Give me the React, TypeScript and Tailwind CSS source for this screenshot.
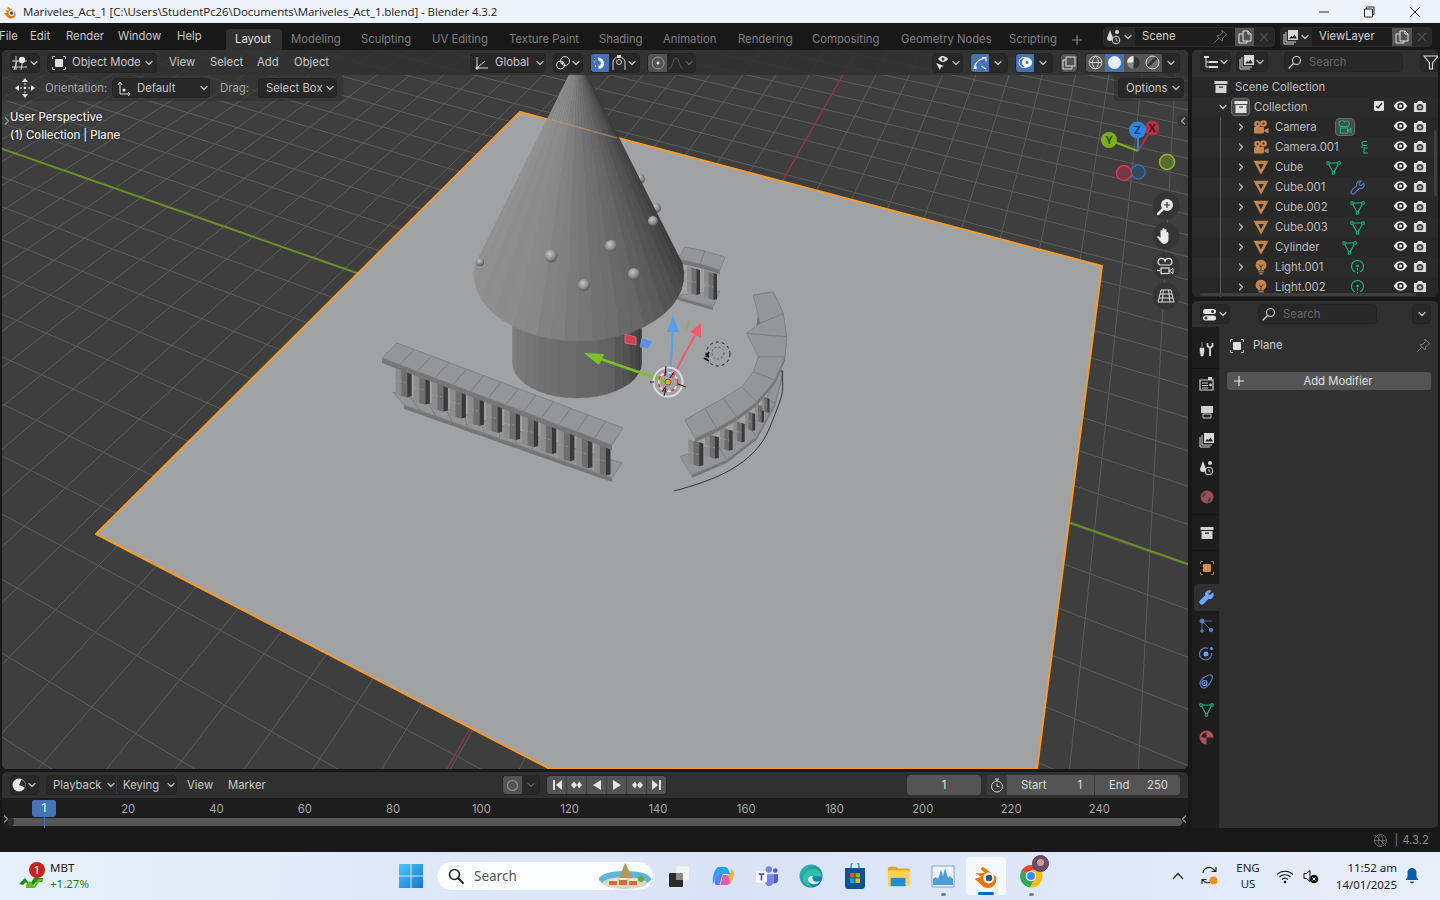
import React from "react";

type P = { children?: React.ReactNode; className?: string };
type Pt = [number, number];

/* ---------- small blender icons ---------- */
const Chev = ({ dir = "down", color = "#c4c4c4", size = 10 }: { dir?: string; color?: string; size?: number }) => (
  <svg width={size} height={size} viewBox="0 0 10 10" className="shrink-0">
    <path
      d={dir === "down" ? "M2 3.500 5 6.500 8 3.500" : dir === "right" ? "M3.500 2 6.500 5 3.500 8" : "M6.500 2 3.500 5 6.500 8"}
      fill="none"
      stroke={color}
      strokeWidth="1.200"
      strokeLinecap="round"
      strokeLinejoin="round"
    />
  </svg>
);

const ObjSquare = ({ fill = "#e0e0e0", line = "#bdbdbd" }: { fill?: string; line?: string }) => (
  <svg width="16" height="16" viewBox="0 0 16 16" className="shrink-0">
    <rect x="4" y="4" width="8" height="8" rx="1" fill={fill} />
    <path d="M1.500 4V1.500H4M12 1.500h2.500V4M14.500 12v2.500H12M4 14.500H1.500V12" fill="none" stroke={line} strokeWidth="1" />
  </svg>
);

const View3D = () => (
  <svg width="17" height="16" viewBox="0 0 17 16" className="shrink-0">
    <path d="M1 6h15M1 12h15M5 1v14M12 3 10 15M3 15l3-9" stroke="#cfcfcf" strokeWidth="1" fill="none" />
    <circle cx="11" cy="5" r="3.200" fill="#e4e4e4" />
  </svg>
);

const Eye = () => (
  <svg width="15" height="12" viewBox="0 0 15 12" className="shrink-0">
    <path d="M.8 6C3 2.500 5 1.300 7.500 1.300S12 2.500 14.200 6C12 9.500 10 10.700 7.500 10.700S3 9.500.8 6Z" fill="#ececec" />
    <circle cx="7.500" cy="6" r="3.200" fill="#2a2a2a" />
    <circle cx="7.500" cy="6" r="1.500" fill="#ececec" />
  </svg>
);

const CamRestrict = () => (
  <svg width="14" height="13" viewBox="0 0 14 13" className="shrink-0">
    <path d="M1 3h3l1-2h4l1 2h3v9H1Z" fill="#dedede" />
    <circle cx="7" cy="7.300" r="3.300" fill="#3a3a3a" />
    <circle cx="7" cy="7.300" r="1.600" fill="#bcbcbc" />
  </svg>
);

const MeshObj = () => (
  <svg width="16" height="15" viewBox="0 0 16 15" className="shrink-0">
    <path fillRule="evenodd" d="M.5 .8h15L8 14.800ZM5.200 4 8 9.500 10.800 4Z" fill="#c4864c" />
  </svg>
);

const CamObj = () => (
  <svg width="16" height="15" viewBox="0 0 16 15" className="shrink-0">
    <circle cx="4.500" cy="4" r="3.300" fill="#c4864c" />
    <circle cx="10.500" cy="3.500" r="3.300" fill="#c4864c" />
    <rect x="1" y="7" width="10" height="6.500" rx="1" fill="#c4864c" />
    <path d="M11.500 10 15.500 8v5.500l-4-2Z" fill="#c4864c" />
    <circle cx="4.500" cy="4" r="1" fill="#2a2a2a" />
    <circle cx="10.500" cy="3.500" r="1" fill="#2a2a2a" />
  </svg>
);

const LightObj = () => (
  <svg width="14" height="16" viewBox="0 0 14 16" className="shrink-0">
    <path d="M7 .8a5.300 5.300 0 0 1 3 9.700v1H4v-1A5.300 5.300 0 0 1 7 .8Z" fill="#c4864c" />
    <path d="M5 5.500 7 8l2-2.500M7 8v3" stroke="#2a2a2a" strokeWidth=".9" fill="none" />
    <path d="M4.500 12.800h5M5.500 14.800h3" stroke="#c4864c" strokeWidth="1.200" />
  </svg>
);

const GreenTri = ({ color = "#12b886" }: { color?: string }) => (
  <svg width="15" height="15" viewBox="0 0 15 15" className="shrink-0">
    <path d="M2 3h11L7.500 13Z" fill="none" stroke={color} strokeWidth="1.100" />
    <path d="M.8 1.800h2.400v2.400H.8ZM11.800 1.800h2.400v2.400h-2.400ZM6.300 11.800h2.400v2.400H6.300Z" fill="#282828" stroke={color} strokeWidth="1" />
  </svg>
);

const BlueWrench = ({ size = 15, fill = "none", color = "#5680c2" }: { size?: number; fill?: string; color?: string }) => (
  <svg width={size} height={size} viewBox="0 0 15 15" className="shrink-0">
    <path
      d="M13.800 3.200 11.200 5.600 9.400 5 8.900 3.400 11.500 1c-2-.6-3.900.2-4.600 2-.3.900-.2 1.700 0 2.400L1.500 10.600c-.8.800-.8 2 0 2.800s2 .8 2.800 0l5.300-5.200c.8.300 1.700.3 2.500 0 1.700-.7 2.400-2.800 1.700-5Z"
      fill={fill}
      stroke={color}
      strokeWidth="1.100"
      strokeLinejoin="round"
    />
  </svg>
);

const GreenBulb = () => (
  <svg width="15" height="16" viewBox="0 0 15 16" className="shrink-0">
    <path d="M5 12.800A6 6 0 1 1 10 12.800" fill="none" stroke="#12b886" strokeWidth="1.100" />
    <circle cx="7.500" cy="7" r="1.300" fill="#12b886" />
    <path d="M7.500 9v2.500M7.500 13v1.800" stroke="#12b886" strokeWidth="1.100" />
  </svg>
);

const GreenCam = ({ small }: { small?: boolean }) =>
  small ? (
    <svg width="10" height="15" viewBox="0 0 10 15" className="shrink-0">
      <path d="M7 1.500H4a2 2 0 0 0 0 4h3M8 8H4v5h4M2 8V6" fill="none" stroke="#12b886" strokeWidth="1.100" />
    </svg>
  ) : (
    <svg width="16" height="16" viewBox="0 0 16 16" className="shrink-0">
      <path d="M4.500 7.500a3 3 0 1 1 3-4.500 2.800 2.800 0 1 1 3 4.500Z" fill="none" stroke="#12b886" strokeWidth="1.100" />
      <rect x="3.500" y="9" width="7" height="5" fill="none" stroke="#12b886" strokeWidth="1.100" />
      <path d="M10.500 11.500 14 9.500v4Z" fill="none" stroke="#12b886" strokeWidth="1.100" />
    </svg>
  );

const BoxIcon = ({ color = "#d2d2d2" }: { color?: string }) => (
  <svg width="14" height="14" viewBox="0 0 14 14" className="shrink-0">
    <path fillRule="evenodd" d="M.5 1h13v3H.5ZM1.500 5h11v8h-11ZM5 6.500v1.300h4V6.500Z" fill={color} />
  </svg>
);

const SearchGlass = () => (
  <svg width="14" height="14" viewBox="0 0 14 14" className="shrink-0">
    <circle cx="8.500" cy="5.500" r="4" fill="none" stroke="#cfcfcf" strokeWidth="1.100" />
    <path d="M5.500 8.500 1 13" stroke="#cfcfcf" strokeWidth="1.200" strokeLinecap="round" />
  </svg>
);

const Pin = ({ color = "#9a9a9a" }: { color?: string }) => (
  <svg width="15" height="15" viewBox="0 0 15 15" className="shrink-0">
    <path d="M9 1.200 13.800 6l-1.600.5-2.700 2.700-.3 2.800-2-2-1.300-1.300-2-2 2.800-.4 2.700-2.700ZM5.800 9.200 1.200 13.800" fill="none" stroke={color} strokeWidth="1" strokeLinejoin="round" />
  </svg>
);

const CopyDoc = () => (
  <svg width="14" height="14" viewBox="0 0 14 14" className="shrink-0">
    <path d="M5 1h5l3 3v7H5ZM10 1v3h3M5 4H1v9h8v-2" fill="none" stroke="#e2e2e2" strokeWidth="1" />
  </svg>
);

const SmallX = () => (
  <svg width="12" height="12" viewBox="0 0 12 12" className="shrink-0">
    <path d="M2 2l8 8M10 2l-8 8" stroke="#4e4e4e" strokeWidth="1.200" />
  </svg>
);

const SceneIco = () => (
  <svg width="16" height="16" viewBox="0 0 16 16" className="shrink-0">
    <path d="M4 1 7 9a3 3 0 0 1-6 0Z" fill="#d8d8d8" />
    <circle cx="11" cy="3" r="2" fill="#d8d8d8" />
    <circle cx="10" cy="11" r="3.800" fill="none" stroke="#d8d8d8" strokeWidth="1" />
    <path d="M10 9v2l1.500 1" stroke="#d8d8d8" fill="none" />
  </svg>
);

const LayerIco = () => (
  <svg width="16" height="16" viewBox="0 0 16 16" className="shrink-0">
    <path d="M1 5v10h10M3 3v10h10" fill="none" stroke="#d8d8d8" strokeWidth="1" />
    <path fillRule="evenodd" d="M5 1h10v10H5ZM6 9.500h8l-2.500-4-2 2.500-1.200-1Z" fill="#d8d8d8" />
  </svg>
);

/* ---------- ui pieces ---------- */
const Btn = ({ children, className = "" }: P) => (
  <div className={`flex h-[20px] shrink-0 items-center rounded-[4px] border border-[#242424] bg-[#282828] text-[#c6c6c6] ${className}`}>{children}</div>
);

const Seg = ({ children, className = "" }: P) => <div className={`flex h-full items-center justify-center ${className}`}>{children}</div>;

const menuItems = [
  ["File", "w-[31px] -ml-[1px]"],
  ["Edit", "w-[36px]"],
  ["Render", "w-[52px]"],
  ["Window", "w-[59px]"],
  ["Help", "w-[49px]"],
];
const tabs = [
  ["Layout", "w-[56px]"],
  ["Modeling", "w-[70px]"],
  ["Sculpting", "w-[71px]"],
  ["UV Editing", "w-[77px]"],
  ["Texture Paint", "w-[90px]"],
  ["Shading", "w-[64px]"],
  ["Animation", "w-[75px]"],
  ["Rendering", "w-[74px]"],
  ["Compositing", "w-[89px]"],
  ["Geometry Nodes", "w-[108px]"],
  ["Scripting", "w-[68px]"],
];

const TopBar = () => (
  <div className="flex h-[27px] shrink-0 items-center bg-[#181818]">
    {menuItems.map(([t, w]) => (
      <span key={t} className={`${w} shrink-0 text-[#c8c8c8]`}>
        {t}
      </span>
    ))}
    <div className="mt-[6px] flex h-[21px] shrink-0 self-start">
      {tabs.map(([t, w], i) => (
        <div key={t} className={`flex shrink-0 items-center rounded-t-[4px] pl-[9px] ${w} ${i === 0 ? "bg-[#303030] text-[#e2e2e2]" : "text-[#808080]"}`}>
          {t}
        </div>
      ))}
      <div className="flex w-[35px] shrink-0 items-center pl-[3px] text-[#808080]">
        <svg width="12" height="12" viewBox="0 0 12 12">
          <path d="M6 1v10M1 6h10" stroke="#8a8a8a" strokeWidth="1.100" />
        </svg>
      </div>
    </div>
    <div className="flex h-[20px] w-[172px] shrink-0 items-stretch overflow-hidden rounded-[4px] border border-[#2c2c2c] bg-[#282828]">
      <Seg className="w-[31px] gap-[1px]">
        <SceneIco />
        <Chev />
      </Seg>
      <div className="flex w-[100px] items-center justify-between bg-[#1d1d1d] px-[7px] text-[#d4d4d4]">
        Scene
        <Pin color="#6f6f6f" />
      </div>
      <Seg className="w-[19px] bg-[#545454]">
        <CopyDoc />
      </Seg>
      <Seg className="w-[20px]">
        <SmallX />
      </Seg>
    </div>
    <div className="ml-[5px] flex h-[20px] w-[152px] shrink-0 items-stretch overflow-hidden rounded-[4px] border border-[#2c2c2c] bg-[#282828]">
      <Seg className="w-[31px] gap-[1px]">
        <LayerIco />
        <Chev />
      </Seg>
      <div className="flex w-[80px] items-center bg-[#1d1d1d] px-[7px] text-[#d4d4d4]">ViewLayer</div>
      <Seg className="w-[20px] bg-[#545454]">
        <CopyDoc />
      </Seg>
      <Seg className="w-[19px]">
        <SmallX />
      </Seg>
    </div>
  </div>
);

/* ---------- 3d scene, all in page coordinates ---------- */
const VA: Pt = [-2015, -559];
const VB: Pt = [1210, -575];
const Y0 = 400;

// family along the green axis: cut at the viewport's left and right edges
const lineA = (x: number) => {
  const s = (Y0 - VA[1]) / (x - VA[0]);
  return { x1: 0, y1: VA[1] + (0 - VA[0]) * s, x2: 1190, y2: VA[1] + (1190 - VA[0]) * s };
};
// family along the red axis: cut at the viewport's top and bottom
const lineB = (x: number) => {
  const s = (x - VB[0]) / (Y0 - VB[1]);
  return { x1: VB[0] + (40 - VB[1]) * s, y1: 40, x2: VB[0] + (780 - VB[1]) * s, y2: 780 };
};

const lerp = (a: Pt, b: Pt, t: number): Pt => [a[0] + (b[0] - a[0]) * t, a[1] + (b[1] - a[1]) * t];
const pts = (l: Pt[]) => l.map((p) => `${p[0].toFixed(1)},${p[1].toFixed(1)}`).join(" ");
const z = (x: number, y: number): Pt => [370 + x / 3, 70 + y / 3];
const grey = (v: number) => {
  const h = Math.round(v).toString(16).padStart(2, "0");
  return `#${h}${h}${h}`;
};

const Grid = () => {
  const aLines = Array.from({ length: 60 }, (_, i) => 717 + (i - 14) * 103.3);
  const bLines = Array.from({ length: 42 }, (_, i) => 659 + (i - 30) * 49.9);
  return (
    <g>
      {aLines.map((x, i) => (
        <line key={i} {...lineA(x)} stroke="#5c5c5c" strokeWidth="1" />
      ))}
      {bLines.map((x, i) => (
        <line key={i} {...lineB(x)} stroke="#5c5c5c" strokeWidth="1" />
      ))}
    </g>
  );
};

const Cone = () => {
  const tip: Pt = [578, 57];
  const [cx, cy, rx, ry] = [579, 275, 105, 66];
  const n = 26;
  const from = 190;
  const to = -10;
  const at = (d: number): Pt => [cx + rx * Math.cos((d * Math.PI) / 180), cy + ry * Math.sin((d * Math.PI) / 180)];
  const shade = (d: number) => {
    if (d > 120) return 146 - (190 - d) * 0.12;
    if (d > 60) return 137 - (120 - d) * 0.55;
    return 104 - (60 - d) * 0.68;
  };
  return (
    <g>
      {Array.from({ length: n }, (_, i) => {
        const d0 = from + ((to - from) * i) / n;
        const d1 = from + ((to - from) * (i + 1)) / n;
        const c = grey(shade((d0 + d1) / 2) + (i % 2 ? 1 : -1));
        return <polygon key={i} points={pts([tip, at(d0), at(d1)])} fill={c} stroke={c} strokeWidth=".4" />;
      })}
    </g>
  );
};

const Tower = () => {
  const [cx, cy, rx, ry] = [577, 363, 64.500, 35];
  const n = 20;
  return (
    <g>
      {Array.from({ length: n }, (_, i) => {
        const d0 = 180 - (180 * i) / n;
        const d1 = 180 - (180 * (i + 1)) / n;
        const p0: Pt = [cx + rx * Math.cos((d0 * Math.PI) / 180), cy + ry * Math.sin((d0 * Math.PI) / 180)];
        const p1: Pt = [cx + rx * Math.cos((d1 * Math.PI) / 180), cy + ry * Math.sin((d1 * Math.PI) / 180)];
        const t = i / (n - 1);
        const v = (t < 0.65 ? 126 - t * 40 : 100 - (t - 0.65) * 130) + (i % 2 ? 1 : -1);
        const c = grey(v);
        return <polygon key={i} points={pts([[p0[0], 318], [p1[0], 318], p1, p0])} fill={c} stroke={c} strokeWidth=".4" />;
      })}
    </g>
  );
};

const Baluster = ({ x, y, h, w = 16 }: { x: number; y: number; h: number; w?: number }) => (
  <g>
    <polygon points={pts([[x, y], [x + w * 0.34, y + 1.500], [x + w * 0.34, y + h + 1.500], [x, y + h]])} fill="#8c8c8c" />
    <polygon points={pts([[x + w * 0.34, y + 1.500], [x + w * 0.72, y + 3], [x + w * 0.72, y + h + 3], [x + w * 0.34, y + h + 1.500]])} fill="#6e6e6e" />
    <polygon points={pts([[x + w * 0.72, y + 3], [x + w, y + 4], [x + w, y + h + 2], [x + w * 0.72, y + h + 3]])} fill="#3a3a3a" />
    <line x1={x} y1={y + h * 0.55} x2={x + w * 0.72} y2={y + h * 0.55 + 2} stroke="#a8a8a8" strokeWidth=".6" strokeDasharray="2 2" />
  </g>
);

const RailTop = ({ back, front, side = 5, fill = "#959697" }: { back: Pt[]; front: Pt[]; side?: number; fill?: string }) => (
  <g>
    {back.slice(0, -1).map((_, i) => (
      <g key={i}>
        <polygon points={pts([front[i], front[i + 1], [front[i + 1][0], front[i + 1][1] + side], [front[i][0], front[i][1] + side]])} fill="#767676" />
        <polygon points={pts([back[i], back[i + 1], front[i + 1], front[i]])} fill={fill} stroke="#7c7c7c" strokeWidth=".8" />
      </g>
    ))}
  </g>
);

const rangePts = (a: Pt, b: Pt, n: number) => Array.from({ length: n + 1 }, (_, i) => lerp(a, b, i / n));

const StraightRail = () => {
  const n = 13;
  return (
    <g>
      <RailTop back={rangePts([393, 392], [622, 463], n)} front={rangePts([404, 405], [612, 478], n)} side={4} fill="#949596" />
      {Array.from({ length: 12 }, (_, i) => {
        const t = (i + 0.04) / 11.4;
        return <Baluster key={i} x={395 + t * 206} y={364 + t * 81} h={30} />;
      })}
      <RailTop back={rangePts([397, 343], [623, 428], n)} front={rangePts([382, 358], [612, 445], n)} />
    </g>
  );
};

const BackRail = () => (
  <g>
    <RailTop back={[[680, 295], [720, 291]]} front={[[678, 297], [713, 307]]} side={3} fill="#949596" />
    <Baluster x={687} y={266} h={26} w={13} />
    <Baluster x={704} y={270} h={27} w={13} />
    <RailTop back={[[685, 247], [705, 251], [725, 257]]} front={[[678, 259], [700, 264], [720, 270]]} side={4} />
  </g>
);

const CurvedRail = () => {
  const baseBack = [z(930, 1160), z(1040, 1120), z(1130, 1060), z(1190, 985), z(1225, 900)];
  const baseFront = [z(965, 1215), z(1070, 1170), z(1160, 1100), z(1215, 1000), z(1240, 905)];
  const inner = [z(945, 1050), z(1005, 1015), z(1060, 985), z(1115, 950), z(1150, 905), z(1165, 860), z(1130, 790), z(1170, 760), z(1150, 675)];
  const outer = [z(975, 1105), z(1040, 1075), z(1100, 1040), z(1160, 995), z(1215, 930), z(1245, 860), z(1250, 800), z(1240, 730), z(1210, 665)];
  const cols = [z(955, 1108), z(1005, 1090), z(1050, 1070), z(1090, 1050), z(1125, 1020), z(1155, 1000), z(1175, 975)];
  return (
    <g>
      <RailTop back={baseBack} front={baseFront} side={3} fill="#949596" />
      {cols.map((p, i) => (
        <Baluster key={i} x={p[0]} y={p[1]} h={24 - i * 1.5} w={15 - i * 1.2} />
      ))}
      <polygon points={pts([z(1165, 725), z(1178, 730), z(1175, 808), z(1155, 800)])} fill="#6c6c6c" />
      <polygon points={pts([z(1170, 760), z(1178, 750), z(1176, 810), z(1168, 805)])} fill="#3f3f3f" />
      <RailTop back={inner} front={outer} side={4} fill="#959697" />
      <path d="M674 491C715 480 755 465 770 427S783 395 782 370" fill="none" stroke="#161616" strokeWidth=".8" />
    </g>
  );
};

const balls: [number, number, number][] = [
  [551, 256, 6.500],
  [611, 246, 6],
  [634, 274, 6],
  [584, 285, 6],
  [653, 221, 5],
  [480, 262, 4],
];

const Gizmo3D = () => (
  <g>
    <line x1="667" y1="382" x2="598" y2="358" stroke="#7cc224" strokeWidth="2.500" />
    <polygon points="584,353 604,354 599,365" fill="#7cc224" />
    <line x1="670" y1="378" x2="673" y2="328" stroke="#5b9bee" strokeWidth="2" />
    <polygon points="673,315 679,332 667,332" fill="#5b9bee" />
    <line x1="672" y1="378" x2="695" y2="335" stroke="#f0596b" strokeWidth="2" />
    <polygon points="701,323 701,338 690,332" fill="#f0596b" />
    <polygon points="625,334 636,337 636,345 625,343" fill="#d5404f" stroke="#ee7f8a" strokeWidth=".6" />
    <polygon points="642,338 653,341 648,349 640,347" fill="#5f90d8" stroke="#86aee6" strokeWidth=".6" />
    <polygon points="688,318 690,323 686,333 685,327" fill="#8da58a" />
    <circle cx="668" cy="382" r="14.500" fill="none" stroke="#dcdcdc" strokeWidth="2" />
    <circle cx="668" cy="382" r="9.500" fill="none" stroke="#ffffff" strokeWidth="1.500" />
    <circle cx="668" cy="382" r="9.500" fill="none" stroke="#e02b2b" strokeWidth="1.500" strokeDasharray="4 4" />
    <path d="M654 382h-4M686 387l-8-3M666 366l-1 10M664 396l2-8M662 392l4-6M674 372l-4 6" stroke="#111" strokeWidth="1" />
    <circle cx="668" cy="382" r="3" fill="#f39c21" stroke="#222" strokeWidth=".5" />
    <circle cx="718" cy="354" r="12" fill="none" stroke="#222" strokeWidth="1" strokeDasharray="3 3" />
    <circle cx="718" cy="353" r="6" fill="none" stroke="#333" strokeWidth=".7" strokeDasharray="2 2" />
    <path d="M706 354l3 3M704 358l5 3M709 352l-3 5" stroke="#111" strokeWidth="1.800" />
  </g>
);

const NavBtn = ({ y, children }: { y: number; children: React.ReactNode }) => (
  <g transform={`translate(1166 ${y})`}>
    <circle r="13.500" fill="#353535" />
    {children}
  </g>
);

const NavGizmo = () => (
  <g fontFamily="Inter, sans-serif" fontWeight="700" fontSize="11" textAnchor="middle">
    <line x1="1138" y1="151" x2="1152" y2="128" stroke="#b03248" strokeWidth="2" />
    <line x1="1138" y1="151" x2="1109" y2="140" stroke="#7cb01f" strokeWidth="2" />
    <line x1="1138" y1="151" x2="1138" y2="130" stroke="#2e86e0" strokeWidth="2" />
    <circle cx="1152" cy="128" r="7.500" fill="#b03248" />
    <text x="1152" y="132" fill="#4b1420">X</text>
    <circle cx="1109" cy="140" r="8" fill="#7cb01f" />
    <text x="1109" y="144" fill="#33500a">Y</text>
    <circle cx="1137.500" cy="130" r="8.500" fill="#2e86e0" />
    <text x="1137.500" y="134" fill="#123a66">Z</text>
    <circle cx="1138" cy="172" r="7" fill="#36485d" stroke="#2e6fb6" strokeWidth="1.500" />
    <circle cx="1124" cy="173" r="7.500" fill="#6f3a44" stroke="#e5344f" strokeWidth="1.500" />
    <circle cx="1167" cy="162" r="7.500" fill="#5a6a36" stroke="#84bb22" strokeWidth="1.500" />
    <NavBtn y={206}>
      <circle cx="1" cy="-1" r="6" fill="#e6e6e6" />
      <path d="M-3 3-8 8" stroke="#e6e6e6" strokeWidth="2.500" strokeLinecap="round" />
      <path d="M1-4v6M-2-1h6" stroke="#333" strokeWidth="1.200" />
    </NavBtn>
    <NavBtn y={236}>
      <path d="M-3 8c-2-2-4-4-6-7 1-1.500 2.500 0 3.500 1V-5c0-1.500 2-1.500 2 0V-1-7c0-1.500 2-1.500 2 0V-1-6c0-1.500 2-1.500 2 0V0-3c0-1.500 2-1.500 2 0V3c0 3-2 5-5.500 5Z" fill="#ececec" />
    </NavBtn>
    <NavBtn y={266}>
      <path d="M-6-1a3.500 3.500 0 1 1 5-3 3.500 3.500 0 1 1 5 3Z" fill="none" stroke="#dedede" strokeWidth="1.200" />
      <rect x="-5" y="2" width="8" height="5.500" fill="none" stroke="#dedede" strokeWidth="1.200" />
      <path d="M3 5l4-2.500v5Z" fill="none" stroke="#dedede" />
      <path d="M-9 4.500h3" stroke="#dedede" strokeWidth="1.200" />
    </NavBtn>
    <NavBtn y={296}>
      <path d="M-5-6h10l3 12h-16ZM-2.500-6-4 6M2.500-6 4 6M-6-2H6M-7 2H7" fill="none" stroke="#dedede" strokeWidth="1" />
    </NavBtn>
  </g>
);

const Scene = () => (
  <svg viewBox="2 50 1186 719" width="1186" height="719" className="absolute left-0 top-0">
    <defs>
      <radialGradient id="ball" cx="40%" cy="35%" r="70%">
        <stop offset="0" stopColor="#c8c8c8" />
        <stop offset=".55" stopColor="#8e8e8e" />
        <stop offset="1" stopColor="#4e4e4e" />
      </radialGradient>
    </defs>
    <rect x="2" y="50" width="1186" height="719" fill="#3e3e3e" />
    <Grid />
    <line x1="0" y1="148" x2="1188" y2="564" stroke="#6a8f22" strokeWidth="2" />
    <line x1="857" y1="50" x2="447" y2="769" stroke="#8c3343" strokeWidth="1.500" />
    <polygon points="520,112 1102,266 1037,769 550,769 96,534" fill="#a1a2a4" stroke="#f59a2c" strokeWidth="2" strokeLinejoin="round" />
    <circle cx="640" cy="179" r="5" fill="url(#ball)" />
    <circle cx="656" cy="208" r="5" fill="url(#ball)" />
    <BackRail />
    <StraightRail />
    <CurvedRail />
    <Tower />
    <Cone />
    {balls.map(([x, y, r]) => (
      <circle key={x} cx={x} cy={y} r={r} fill="url(#ball)" />
    ))}
    <line x1="549" y1="119" x2="617" y2="138" stroke="#c59a63" strokeWidth="1.500" opacity=".55" />
    <Gizmo3D />
    <NavGizmo />
  </svg>
);

/* ---------- 3d viewport headers ---------- */
const Viewport = () => (
  <div className="relative h-[719px] w-[1186px] overflow-hidden rounded-[5px] bg-[#3e3e3e]">
    <Scene />
    <div className="absolute left-0 top-0 flex h-[25px] w-full items-center bg-[#303030]/85 pl-[8px] text-[#c8c8c8]">
      <Btn className="w-[30px] justify-center gap-[1px]">
        <View3D />
        <Chev />
      </Btn>
      <Btn className="ml-[7px] w-[110px] justify-between pl-[3px] pr-[2px]">
        <ObjSquare />
        <span className="ml-[5px] flex-1">Object Mode</span>
        <Chev />
      </Btn>
      <span className="ml-[12px] w-[41px] shrink-0">View</span>
      <span className="w-[47px] shrink-0">Select</span>
      <span className="w-[37px] shrink-0">Add</span>
      <span className="w-[176px] shrink-0">Object</span>
      <Btn className="w-[76px] justify-between pl-[3px] pr-0">
        <svg width="16" height="16" viewBox="0 0 16 16">
          <path d="M3 2v11h11M3 13l8-7" stroke="#d4d4d4" fill="none" />
          <circle cx="3" cy="13" r="1.500" fill="#d4d4d4" />
        </svg>
        <span className="ml-[5px] flex-1">Global</span>
        <Chev />
      </Btn>
      <Btn className="ml-[7px] w-[30px] justify-center">
        <svg width="16" height="16" viewBox="0 0 16 16">
          <circle cx="5.500" cy="10" r="4" fill="none" stroke="#d4d4d4" />
          <circle cx="10" cy="6" r="4.500" fill="none" stroke="#d4d4d4" />
          <circle cx="7.500" cy="8" r="1.200" fill="#d4d4d4" />
        </svg>
        <Chev />
      </Btn>
      <Btn className="ml-[7px] w-[50px] overflow-hidden">
        <Seg className="w-[18px] bg-[#4772b3]">
          <svg width="14" height="14" viewBox="0 0 14 14">
            <path d="M5 3a4.500 4.500 0 0 1 4.500 4.500c0 2-1.200 3.500-4 4" fill="none" stroke="#fff" strokeWidth="3" />
            <path d="M1 2.500h2M1 6h2M2 10h2" stroke="#fff" strokeWidth="1.200" strokeDasharray="1 1" />
          </svg>
        </Seg>
        <Seg className="flex-1 gap-0">
          <svg width="16" height="16" viewBox="0 0 16 16">
            <rect x="6" y="0" width="4" height="3" fill="#d8d8d8" />
            <path d="M2 15V7a6 5 0 0 1 12 0v8" fill="none" stroke="#d4d4d4" />
            <circle cx="8" cy="7" r="2.500" fill="none" stroke="#d4d4d4" />
          </svg>
          <Chev />
        </Seg>
      </Btn>
      <Btn className="ml-[7px] w-[49px] overflow-hidden">
        <Seg className="w-[19px] bg-[#545454]">
          <svg width="16" height="16" viewBox="0 0 16 16">
            <circle cx="8" cy="8" r="6" fill="none" stroke="#9a9a9a" />
            <circle cx="8" cy="8" r="1.500" fill="#dcdcdc" />
          </svg>
        </Seg>
        <Seg className="flex-1 gap-0">
          <svg width="16" height="14" viewBox="0 0 16 14">
            <path d="M1 13c3 0 4-11 7-11s4 11 7 11" fill="none" stroke="#5e5e5e" />
          </svg>
          <Chev color="#5e5e5e" />
        </Seg>
      </Btn>
      <Btn className="ml-[236px] w-[31px] justify-center">
        <svg width="17" height="16" viewBox="0 0 17 16">
          <path d="M4 4C6 1.500 7.500 1 9 1s3.500.8 5 3c-1.500 2.200-3.500 3-5 3S6 6 4 4Z" fill="#e2e2e2" />
          <circle cx="9" cy="4" r="1.500" fill="#333" />
          <path d="M2 8l4 7 1-3 3-1Z" fill="#e2e2e2" />
        </svg>
        <Chev />
      </Btn>
      <Btn className="ml-[7px] w-[38px] overflow-hidden">
        <Seg className="w-[18px] bg-[#4772b3]">
          <svg width="14" height="14" viewBox="0 0 14 14">
            <path d="M1 13C2 7 6 3 12 2M9 1.500h4v4M8 10l5 3" fill="none" stroke="#fff" strokeWidth="1.100" />
            <circle cx="2.500" cy="11.500" r="1.500" fill="#fff" />
          </svg>
        </Seg>
        <Seg className="flex-1">
          <Chev />
        </Seg>
      </Btn>
      <Btn className="ml-[7px] w-[38px] overflow-hidden">
        <Seg className="w-[18px] bg-[#4772b3]">
          <svg width="15" height="15" viewBox="0 0 15 15">
            <circle cx="6" cy="7.500" r="5" fill="none" stroke="#fff" />
            <circle cx="9" cy="7.500" r="5" fill="#fff" />
            <circle cx="9" cy="7.500" r="1.500" fill="#4772b3" />
          </svg>
        </Seg>
        <Seg className="flex-1">
          <Chev />
        </Seg>
      </Btn>
      <Btn className="ml-[7px] w-[18px] justify-center bg-[#545454]">
        <svg width="14" height="14" viewBox="0 0 14 14">
          <rect x="4" y="1" width="9" height="9" fill="none" stroke="#dcdcdc" />
          <path d="M4 4H1v9h9v-3" fill="none" stroke="#dcdcdc" />
        </svg>
      </Btn>
      <Btn className="ml-[7px] w-[95px] overflow-hidden">
        <Seg className="w-[19px] bg-[#545454]">
          <svg width="15" height="15" viewBox="0 0 15 15">
            <circle cx="7.500" cy="7.500" r="6.300" fill="none" stroke="#cfcfcf" />
            <path d="M1.200 7.500h12.600M7.500 1.200c-4 3-4 9.600 0 12.600M7.500 1.200c4 3 4 9.600 0 12.600" fill="none" stroke="#cfcfcf" />
          </svg>
        </Seg>
        <Seg className="w-[19px] bg-[#4772b3]">
          <svg width="15" height="15" viewBox="0 0 15 15">
            <circle cx="7.500" cy="7.500" r="6.500" fill="#e8eef8" />
          </svg>
        </Seg>
        <Seg className="w-[19px] bg-[#545454]">
          <svg width="15" height="15" viewBox="0 0 15 15">
            <circle cx="7.500" cy="7.500" r="6.500" fill="#8a8a8a" />
            <path d="M7.500 1a6.500 6.500 0 0 1 0 13Z" fill="#333" />
            <path d="M7.500 1a6.500 6.500 0 0 0-6.500 6.500h6.500Z" fill="#e6e6e6" />
          </svg>
        </Seg>
        <Seg className="w-[19px] bg-[#545454]">
          <svg width="15" height="15" viewBox="0 0 15 15">
            <circle cx="7.500" cy="7.500" r="6.500" fill="#6e6e6e" stroke="#cfcfcf" />
            <path d="M3 11 11 3" stroke="#333" strokeWidth="3" />
          </svg>
        </Seg>
        <Seg className="flex-1">
          <Chev />
        </Seg>
      </Btn>
    </div>
    <div className="absolute left-0 top-[25px] flex h-[26px] w-[341px] items-center rounded-br-[4px] bg-[#303030]/60 pl-[13px] text-[#c8c8c8]">
      <svg width="20" height="20" viewBox="0 0 20 20">
        <path d="M10 0l3 4H7ZM10 20l-3-4h6ZM0 10l4-3v6ZM20 10l-4 3V7Z" fill="#e0e0e0" />
        <path d="M10 5v2M10 13v2M5 10h2M13 10h2" stroke="#dcdcdc" />
        <circle cx="10" cy="10" r="1.300" fill="#fff" />
      </svg>
      <span className="ml-[10px] w-[67px] shrink-0 text-[#a8a8a8]">Orientation:</span>
      <Btn className="w-[98px] justify-between pl-[3px] pr-0">
        <svg width="16" height="16" viewBox="0 0 16 16">
          <path d="M4 14V3M2 5l2-3 2 3M4 14h10M12 12l2 2-2 2" stroke="#d4d4d4" fill="none" />
          <circle cx="8" cy="10" r="1.600" fill="#e0e0e0" />
        </svg>
        <span className="ml-[5px] flex-1">Default</span>
        <Chev />
      </Btn>
      <span className="ml-[10px] w-[38px] shrink-0 text-[#a8a8a8]">Drag:</span>
      <Btn className="w-[79px] justify-between pl-[7px] pr-[1px]">
        Select Box
        <Chev />
      </Btn>
    </div>
    <div className="absolute right-0 top-[25px] flex h-[26px] w-[74px] items-center justify-center rounded-bl-[4px] bg-[#303030]/60">
      <Btn className="w-[66px] justify-between pl-[7px] pr-[2px]">
        Options
        <Chev />
      </Btn>
    </div>
    <div className="absolute left-[8px] top-[58px] font-medium leading-[18px] text-[#f2f2f2] [text-shadow:0_0_2px_#000]">
      <div>User Perspective</div>
      <div>(1) Collection | Plane</div>
    </div>
    <div className="absolute left-0 top-[66px]">
      <Chev dir="right" color="#9a9a9a" />
    </div>
    <div className="absolute right-0 top-[66px] rounded-l-[3px] bg-[#333]">
      <Chev dir="left" color="#a6a6a6" />
    </div>
  </div>
);

/* ---------- timeline ---------- */
const Glyph = ({ d }: { d: string }) => (
  <Seg className="flex-1 border-r border-[#3a3a3a] bg-[#545454] last:border-r-0">
    <svg width="14" height="12" viewBox="0 0 14 12">
      <path d={d} fill="#e6e6e6" />
    </svg>
  </Seg>
);

const rulerNums = [20, 40, 60, 80, 100, 120, 140, 160, 180, 200, 220, 240];

const Timeline = () => (
  <div className="relative h-[56px] w-[1186px] overflow-hidden rounded-[5px] bg-[#1d1d1d]">
    <div className="flex h-[26px] items-center bg-[#303030] pl-[8px]">
      <Btn className="w-[29px] justify-center gap-[1px]">
        <svg width="14" height="14" viewBox="0 0 14 14">
          <circle cx="7" cy="7" r="6.500" fill="#e6e6e6" />
          <path d="M7 7 9.500 1.500A6.500 6.500 0 0 1 13 9.500Z" fill="#303030" />
        </svg>
        <Chev />
      </Btn>
      <Btn className="ml-[7px] w-[131px]">
        <div className="flex h-full w-[70px] items-center justify-between border-r border-[#3a3a3a] pl-[6px]">
          Playback
          <Chev />
        </div>
        <div className="flex h-full flex-1 items-center justify-between pl-[6px]">
          Keying
          <Chev />
        </div>
      </Btn>
      <span className="ml-[10px] w-[41px] shrink-0 pt-[1px] text-[#c8c8c8]">View</span>
      <span className="w-[274px] shrink-0 pt-[1px] text-[#c8c8c8]">Marker</span>
      <Btn className="w-[38px] overflow-hidden">
        <Seg className="w-[19px] bg-[#545454]">
          <svg width="13" height="13" viewBox="0 0 13 13">
            <circle cx="6.500" cy="6.500" r="5" fill="none" stroke="#8e8e8e" strokeWidth="1.200" />
          </svg>
        </Seg>
        <Seg className="flex-1">
          <Chev color="#5e5e5e" />
        </Seg>
      </Btn>
      <Btn className="ml-[6px] w-[121px] overflow-hidden">
        <Glyph d="M3 1h2v10H3ZM12 1v10L6 6Z" />
        <Glyph d="M1 6l3-3.500L7 6l-3 3.500ZM9 2.500l3 3.500-3 3.500-2-3.500Z" />
        <Glyph d="M11 1v10L3 6Z" />
        <Glyph d="M3 1v10l8-5Z" />
        <Glyph d="M13 6l-3-3.500L7 6l3 3.500ZM5 2.500 2 6l3 3.500L7 6Z" />
        <Glyph d="M9 1h2v10H9ZM2 1v10l6-5Z" />
      </Btn>
      <div className="ml-[240px] flex h-[20px] w-[74px] shrink-0 items-center justify-center rounded-[4px] bg-[#545454] text-[#e0e0e0]">1</div>
      <div className="ml-[6px] flex h-[20px] w-[193px] shrink-0 items-stretch overflow-hidden rounded-[4px] bg-[#545454] text-[#dcdcdc]">
        <Seg className="w-[19px] bg-[#3a3a3a]">
          <svg width="14" height="15" viewBox="0 0 14 15">
            <circle cx="7" cy="8.500" r="5.500" fill="none" stroke="#d4d4d4" />
            <path d="M5 1h4M7 1v2M7 5.500v3h2.500" stroke="#d4d4d4" fill="none" />
          </svg>
        </Seg>
        <div className="flex w-[88px] items-center justify-between border-l border-[#3a3a3a] pl-[14px] pr-[12px]">
          <span>Start</span>
          <span>1</span>
        </div>
        <div className="flex flex-1 items-center justify-between border-l border-[#3a3a3a] pl-[14px] pr-[12px]">
          <span>End</span>
          <span>250</span>
        </div>
      </div>
    </div>
    <div className="flex h-[20px] items-center pl-[82px] pt-[3px] text-[#a9a9a9]">
      {rulerNums.map((n) => (
        <span key={n} className="w-[88.300px] shrink-0 text-center">
          {n}
        </span>
      ))}
    </div>
    <div className="mx-[6px] h-[8px] rounded-full bg-[#555555]">
      <div className="h-[8px] w-[6px] rounded-full bg-[#2e2e2e]" />
    </div>
    <div className="absolute left-[30px] top-[28px] flex h-[17px] w-[24px] items-center justify-center rounded-[3px] bg-[#4772b3] text-white">1</div>
    <div className="absolute left-[42px] top-[45px] h-[11px] w-[1px] bg-[#4772b3]" />
    <div className="absolute -left-[1px] top-[42px]">
      <Chev dir="right" color="#9a9a9a" />
    </div>
    <div className="absolute -right-[1px] top-[42px]">
      <Chev dir="left" color="#9a9a9a" />
    </div>
  </div>
);

/* ---------- outliner ---------- */
type Row = { name: string; kind: "cam" | "mesh" | "light"; data: React.ReactNode; dataGap: string };
const rows: Row[] = [
  { name: "Camera", kind: "cam", data: <div className="flex h-[18px] w-[20px] items-center justify-center rounded-[4px] border border-[#6a6a6a] bg-[#4a4a4a]"><GreenCam /></div>, dataGap: "w-[65px]" },
  { name: "Camera.001", kind: "cam", data: <GreenCam small />, dataGap: "w-[85px]" },
  { name: "Cube", kind: "mesh", data: <GreenTri />, dataGap: "w-[53px]" },
  { name: "Cube.001", kind: "mesh", data: <BlueWrench />, dataGap: "w-[77px]" },
  { name: "Cube.002", kind: "mesh", data: <GreenTri />, dataGap: "w-[77px]" },
  { name: "Cube.003", kind: "mesh", data: <GreenTri />, dataGap: "w-[77px]" },
  { name: "Cylinder", kind: "mesh", data: <GreenTri />, dataGap: "w-[69px]" },
  { name: "Light.001", kind: "light", data: <GreenBulb />, dataGap: "w-[77px]" },
  { name: "Light.002", kind: "light", data: <GreenBulb />, dataGap: "w-[77px]" },
];

const Outliner = () => (
  <div className="relative h-[247px] w-[246px] overflow-hidden rounded-[5px] bg-[#282828] text-[#bcbcbc]">
    <div className="flex h-[27px] items-start bg-[#303030] pl-[8px] pt-[2px]">
      <Btn className="w-[31px] justify-center">
        <svg width="16" height="14" viewBox="0 0 16 14">
          <path d="M1 1h5v2H1ZM6 6h9v2H6ZM6 11h9v2H6Z" fill="#dcdcdc" />
          <path d="M3 3v9h3M3 7h3" stroke="#dcdcdc" fill="none" />
        </svg>
        <Chev />
      </Btn>
      <Btn className="ml-[5px] w-[32px] justify-center">
        <LayerIco />
        <Chev />
      </Btn>
      <Btn className="ml-[16px] w-[119px] pl-[3px]">
        <SearchGlass />
        <span className="ml-[7px] text-[#666]">Search</span>
      </Btn>
      <Btn className="ml-[17px] w-[28px] pl-[2px]">
        <svg width="16" height="16" viewBox="0 0 16 16">
          <path d="M1 2h14L9.500 9v6h-3V9Z" fill="none" stroke="#dcdcdc" strokeWidth="1.100" />
        </svg>
      </Btn>
    </div>
    <div className="flex h-[20px] items-center pl-[22px]">
      <BoxIcon />
      <span className="ml-[7px]">Scene Collection</span>
    </div>
    <div className="flex h-[20px] items-center bg-[#2b2b2b] pl-[26px]">
      <Chev />
      <div className="ml-[3px] flex h-[18px] w-[19px] shrink-0 items-center justify-center rounded-[4px] border border-[#707070] bg-[#474747]">
        <BoxIcon color="#e0e0e0" />
      </div>
      <span className="ml-[4px] w-[120px] shrink-0">Collection</span>
      <div className="mb-[2px] flex h-[10px] w-[10px] shrink-0 items-center justify-center rounded-[1px] bg-[#e4e4e4]">
        <svg width="8" height="8" viewBox="0 0 8 8">
          <path d="M1 4l2 2 4-5" stroke="#222" strokeWidth="1.500" fill="none" />
        </svg>
      </div>
      <div className="flex-1" />
      <div className="mb-[2px]">
        <Eye />
      </div>
      <div className="mb-[2px] ml-[5px] mr-[11px]">
        <CamRestrict />
      </div>
    </div>
    {rows.map((r, i) => (
      <div key={r.name} className={`flex h-[20px] items-center pl-[44px] ${i % 2 ? "bg-[#2b2b2b]" : "bg-[#282828]"}`}>
        <Chev dir="right" />
        <div className="ml-[6px] flex w-[18px] shrink-0 justify-center">
          {r.kind === "cam" ? <CamObj /> : r.kind === "mesh" ? <MeshObj /> : <LightObj />}
        </div>
        <div className={`${r.dataGap} shrink-0 pl-[5px]`}>{r.name}</div>
        <div className="flex w-[20px] shrink-0 justify-center">{r.data}</div>
        <div className="flex-1" />
        <div className="mb-[2px]">
          <Eye />
        </div>
        <div className="mb-[2px] ml-[5px] mr-[11px]">
          <CamRestrict />
        </div>
      </div>
    ))}
    <div className="absolute left-[28px] top-[67px] h-[180px] w-[1px] bg-[#5a5a5a]" />
    <div className="absolute bottom-[1px] left-[8px] h-[3px] w-[216px] rounded-full bg-[#3e3e3e]" />
    <div className="absolute right-[1px] top-[80px] h-[66px] w-[3px] rounded-full bg-[#3e3e3e]" />
  </div>
);

/* ---------- properties editor ---------- */
const tabIcon = (d: React.ReactNode, k: string, cls: string, active = false) => (
  <div key={k} className={`flex w-[25px] items-center justify-center ${cls} ${active ? "rounded-l-[4px] bg-[#303030]" : ""}`}>
    {d}
  </div>
);

const PropTabs = () => (
  <div className="flex h-full w-[27px] shrink-0 flex-col items-end bg-[#1d1d1d] pr-0 pt-[10px]">
    {tabIcon(
      <svg width="15" height="15" viewBox="0 0 15 15">
        <path d="M3 0v5M1 6h4v3l-1 5H2L1 9Z" fill="#d8d8d8" stroke="#d8d8d8" strokeWidth=".6" />
        <path d="M11 7v7M8.500 1v3l2.500 2 2.500-2V1" fill="none" stroke="#d8d8d8" strokeWidth="1.800" />
      </svg>,
      "tool",
      "h-[24px]",
    )}
    <div className="mb-[1px] mt-[7px] h-[1px] w-full bg-[#161616]" />
    {tabIcon(
      <svg width="15" height="14" viewBox="0 0 15 14">
        <path d="M1 3h13v10H1Z" fill="none" stroke="#d0d0d0" strokeWidth="1.200" />
        <path d="M3 6h6M3 8.500h6M3 11h6" stroke="#d0d0d0" />
        <circle cx="11.500" cy="8" r="1.400" fill="#d0d0d0" />
        <path d="M9 0h4v3H9Z" fill="#d0d0d0" />
      </svg>,
      "render",
      "h-[28px]",
    )}
    {tabIcon(
      <svg width="14" height="14" viewBox="0 0 14 14">
        <path d="M1 1h12v7H1Z" fill="#cfcfcf" />
        <path d="M3 9h8v4H3Z" fill="none" stroke="#cfcfcf" />
      </svg>,
      "out",
      "h-[28px]",
    )}
    {tabIcon(<LayerIco />, "layer", "h-[28px]")}
    {tabIcon(<SceneIco />, "scene", "h-[28px]")}
    {tabIcon(
      <svg width="14" height="14" viewBox="0 0 14 14">
        <circle cx="7" cy="7" r="6.500" fill="#a84a52" />
        <path d="M4 2c2 1 3 2 1 4s-3 1-4 1M8 8c2-1 4 0 3 2s-2 3-3 3Z" fill="#3d4a5c" />
      </svg>,
      "world",
      "h-[30px]",
    )}
    <div className="mt-[2px] h-[1px] w-full bg-[#161616]" />
    {tabIcon(<BoxIcon />, "coll", "h-[35px]")}
    <div className="h-[1px] w-full bg-[#161616]" />
    {tabIcon(<ObjSquare fill="#d08b4c" line="#a87a52" />, "obj", "h-[33px]")}
    {tabIcon(<BlueWrench fill="#71a8ff" color="#71a8ff" />, "mod", "h-[27px]", true)}
    {tabIcon(
      <svg width="15" height="15" viewBox="0 0 15 15" fill="#5680c2" stroke="#5680c2">
        <circle cx="3" cy="3" r="2" />
        <circle cx="3" cy="13" r="1.200" />
        <circle cx="12" cy="12" r="1.800" />
        <path d="M3 3h10M3 3v10M3 3l9 9" fill="none" strokeWidth=".8" />
      </svg>,
      "part",
      "h-[28px]",
    )}
    {tabIcon(
      <svg width="15" height="15" viewBox="0 0 15 15">
        <path d="M9 2.500A6 6 0 1 0 12.500 7" fill="none" stroke="#5680c2" strokeWidth="1.200" />
        <circle cx="7" cy="8" r="2.500" fill="#71a0e8" />
        <circle cx="12.500" cy="2.500" r="1.500" fill="#71a0e8" />
      </svg>,
      "phys",
      "h-[28px]",
    )}
    {tabIcon(
      <svg width="15" height="15" viewBox="0 0 15 15">
        <path d="M1 9c0-3 5-7 9-8 3-.5 4 1 3 4-1 3-5 9-8 9-2 0-4-2-4-5Z" fill="none" stroke="#5680c2" strokeWidth="1.200" />
        <circle cx="5.500" cy="9" r="2.500" fill="none" stroke="#71a0e8" strokeWidth="1.200" />
        <circle cx="5.500" cy="9" r=".9" fill="#71a0e8" />
      </svg>,
      "cons",
      "h-[28px]",
    )}
    {tabIcon(<GreenTri color="#12b886" />, "data", "h-[28px]")}
    {tabIcon(
      <svg width="15" height="15" viewBox="0 0 15 15">
        <circle cx="7.500" cy="7.500" r="7" fill="#b0505c" />
        <path d="M7.500 7.500H14.500A7 7 0 0 1 7.500 14.500ZM7.500 7.500H2.500A5 5 0 0 1 7.500 2.500Z" fill="#222" />
      </svg>,
      "mat",
      "h-[28px]",
    )}
  </div>
);

const Properties = () => (
  <div className="flex h-[527px] w-[246px] flex-col overflow-hidden rounded-[5px] bg-[#303030] text-[#cfcfcf]">
    <div className="flex h-[26px] shrink-0 items-start pl-[8px] pt-[3px]">
      <Btn className="w-[30px] justify-center gap-[1px]">
        <svg width="15" height="15" viewBox="0 0 15 15">
          <rect x="1" y="2" width="13" height="5" rx="2.500" fill="#e4e4e4" />
          <rect x="1" y="8.500" width="13" height="5" rx="2.500" fill="#e4e4e4" />
          <circle cx="10.500" cy="4.500" r="1.500" fill="#333" />
          <circle cx="4" cy="11" r="1.500" fill="#333" />
        </svg>
        <Chev />
      </Btn>
      <Btn className="ml-[28px] w-[119px] pl-[3px]">
        <SearchGlass />
        <span className="ml-[7px] text-[#666]">Search</span>
      </Btn>
      <Btn className="ml-[35px] w-[19px] justify-center">
        <Chev />
      </Btn>
    </div>
    <div className="flex flex-1">
      <PropTabs />
      <div className="flex-1 pl-[8px] pr-[7px]">
        <div className="flex h-[36px] items-center pl-[2px] pt-[1px]">
          <ObjSquare />
          <span className="ml-[8px] flex-1">Plane</span>
          <Pin color="#7c7c7c" />
        </div>
        <div className="mt-[9px] flex h-[18px] items-center rounded-[3px] bg-[#545454] pl-[6px] text-[#e0e0e0]">
          <svg width="12" height="12" viewBox="0 0 12 12">
            <path d="M6 1v10M1 6h10" stroke="#e4e4e4" strokeWidth="1.200" />
          </svg>
          <span className="flex-1 text-center">Add Modifier</span>
        </div>
      </div>
    </div>
  </div>
);

/* ---------- windows taskbar ---------- */
const BlenderLogo = ({ size }: { size: number }) => (
  <svg width={size} height={size} viewBox="0 0 24 24" className="shrink-0">
    <path d="M9 3.500 21 12.500A7.800 7.800 0 0 1 7.500 20L1.500 14.500 7.500 13 2.500 9.500l8.500-.2L7 5.500Z" fill="#ea7600" />
    <circle cx="14.500" cy="13.800" r="5" fill="#fff" />
    <circle cx="14.800" cy="13.800" r="3" fill="#265787" />
  </svg>
);

const Tile = ({ w, children, className = "" }: { w: string; children?: React.ReactNode; className?: string }) => (
  <div className={`flex shrink-0 items-center justify-center ${w} ${className}`}>{children}</div>
);

const Taskbar = () => (
  <div className="flex h-[48px] shrink-0 items-center bg-gradient-to-r from-[#e6f0fa] via-[#d9e3f6] to-[#e6eefa] font-['Noto_Sans'] text-[#1c1c1c]">
    <div className="relative ml-[18px] flex w-[26px] shrink-0 justify-center pt-[8px]">
      <svg width="26" height="16" viewBox="0 0 26 16">
        <path d="M1 12 7 6l5 6 4-6 9 0-1 4-6 0-5 6-5-6-3 3Z" fill="#1f8a1f" />
        <path d="M8 13 12 9l4 5 4-7h5v2l-4 1-4 6H8Z" fill="#5cc11c" />
      </svg>
      <div className="absolute left-[11px] -top-[2px] flex h-[16px] w-[16px] items-center justify-center rounded-full bg-[#c4241a] text-[11px] text-white">1</div>
    </div>
    <div className="ml-[6px] w-[60px] shrink-0 text-[11.5px] leading-[16px]">
      <div>MBT</div>
      <div className="text-[#1a7f1a]">+1.27%</div>
    </div>
    <Tile w="w-[24px]" className="ml-[289px]">
      <svg width="24" height="24" viewBox="0 0 24 24">
        <defs>
          <linearGradient id="win" x1="0" y1="0" x2="1" y2="1">
            <stop offset="0" stopColor="#52c8f8" />
            <stop offset="1" stopColor="#0a78d4" />
          </linearGradient>
        </defs>
        <path d="M0 0h11.500v11.500H0ZM12.500 0H24v11.500H12.500ZM0 12.500h11.500V24H0ZM12.500 12.500H24V24H12.500Z" fill="url(#win)" />
      </svg>
    </Tile>
    <div className="ml-[13px] flex h-[30px] w-[218px] shrink-0 items-center justify-between rounded-full border border-[#dfe5f0] bg-white/90 pl-[11px] pr-[2px] text-[13.5px] text-[#555]">
      <div className="flex items-center gap-[10px]">
        <svg width="16" height="16" viewBox="0 0 16 16">
          <circle cx="6.500" cy="6.500" r="5" fill="none" stroke="#222" strokeWidth="1.600" />
          <path d="M10.500 10.500 15 15" stroke="#222" strokeWidth="1.800" strokeLinecap="round" />
        </svg>
        Search
      </div>
      <svg width="54" height="28" viewBox="0 0 54 28">
        <ellipse cx="28" cy="17" rx="26" ry="8" fill="#5fb6d8" />
        <ellipse cx="28" cy="21" rx="22" ry="6" fill="#dcd8c6" />
        <path d="M22 16 28 1l8 15Z" fill="#b49a5a" />
        <path d="M12 19h8v4h-8ZM22 18h8v5h-8ZM32 19h8v4h-8Z" fill="#d9683a" />
        <path d="M12 17h8l-1 2h-6ZM22 16h8l-1 2h-6ZM32 17h8l-1 2h-6Z" fill="#f0e6c8" />
        <circle cx="44" cy="17" r="3" fill="#67a83a" />
      </svg>
    </div>
    <Tile w="w-[24px]" className="ml-[13px]">
      <svg width="24" height="24" viewBox="0 0 24 24">
        <rect x="9" y="2" width="13" height="14" rx="1" fill="#f4f4f4" stroke="#e2e2e2" strokeWidth=".5" />
        <rect x="2" y="9" width="14" height="14" rx="1" fill="#2b2b2b" />
        <rect x="9" y="9" width="7" height="7" fill="#8a8a8a" />
      </svg>
    </Tile>
    <Tile w="w-[24px]" className="ml-[20px]">
      <svg width="24" height="24" viewBox="0 0 24 24">
        <path d="M7 3h7c2 0 3 1 4 4l1 3H9c-3 0-4 2-5 5L2 20c-1-6 1-14 5-17Z" fill="#2aa3e8" />
        <path d="M9 21h7c3 0 5-4 6.500-9 .5-2 0-5-2.500-7 1 5-2 6-4 6h-4c-2 4-1 8-3 10Z" fill="#e65ca8" />
        <path d="M4 15c1-3 2-5 5-5h3c-2 3-2 7-3.500 11H6c-2 0-3-2-2-6Z" fill="#5f7de8" />
        <path d="M16 11c2 0 5-1 4-6 2.500 2 3 5 2.500 7-1 3-2 6-4 8 1-3 0-7-2.500-9Z" fill="#f5b73a" />
      </svg>
    </Tile>
    <Tile w="w-[24px]" className="ml-[20px]">
      <svg width="26" height="24" viewBox="0 0 26 24">
        <circle cx="15" cy="5" r="3.500" fill="#7b83eb" />
        <circle cx="22" cy="6" r="2.500" fill="#5059c9" />
        <path d="M11 10h9v8c0 3-2 5-5 5s-4-2-4-5Z" fill="#7b83eb" />
        <path d="M20 10h5v6c0 3-2 4-5 4Z" fill="#5059c9" />
        <rect x="1" y="7" width="12" height="12" rx="1.500" fill="#fff" />
        <path d="M4 10h6M7 10v7" stroke="#4b53bc" strokeWidth="1.800" />
      </svg>
    </Tile>
    <Tile w="w-[24px]" className="ml-[20px]">
      <svg width="24" height="24" viewBox="0 0 24 24">
        <defs>
          <linearGradient id="edge" x1="0" y1="0" x2="1" y2="1">
            <stop offset="0" stopColor="#35c1a0" />
            <stop offset="1" stopColor="#0d64b8" />
          </linearGradient>
        </defs>
        <circle cx="12" cy="12" r="11.500" fill="url(#edge)" />
        <path d="M23 13c0-5-4-8-9-8-5 0-9 4-10 9-1 4 3 9 9 9 1 0-2-1-3-5-.5-3 2-6 6-6 3 0 4 1 7 1Z" fill="#36c9a0" opacity=".8" />
        <path d="M9 15c0 4 4 6 8 5 2-.5 3-2 4-3-3 1-6 1-7-1-1-1-1-3 0-4-3 0-5 1-5 3Z" fill="#f4f8fb" opacity=".9" />
      </svg>
    </Tile>
    <Tile w="w-[24px]" className="ml-[20px]">
      <svg width="22" height="26" viewBox="0 0 22 26">
        <path d="M7 6V3a4 4 0 0 1 8 0v3" fill="none" stroke="#2d9bd6" strokeWidth="1.500" />
        <path d="M1 5h20v18a3 3 0 0 1-3 3H4a3 3 0 0 1-3-3Z" fill="#12518f" />
        <path d="M6 10h4.500v4.500H6Z" fill="#f25022" />
        <path d="M11.500 10H16v4.500h-4.500Z" fill="#7fba00" />
        <path d="M6 15.500h4.500V20H6Z" fill="#00a4ef" />
        <path d="M11.500 15.500H16V20h-4.500Z" fill="#ffb900" />
      </svg>
    </Tile>
    <Tile w="w-[24px]" className="ml-[20px]">
      <svg width="26" height="24" viewBox="0 0 26 24">
        <path d="M1 4a2 2 0 0 1 2-2h7l2 2h11a2 2 0 0 1 2 2v3H1Z" fill="#e5a823" />
        <rect x="1" y="6" width="24" height="17" rx="1.500" fill="#fbd35a" />
        <rect x="4" y="14" width="16" height="9" fill="#1b8fd8" />
      </svg>
    </Tile>
    <div className="ml-[20px] flex w-[24px] shrink-0 flex-col items-center pt-[8px]">
      <svg width="24" height="24" viewBox="0 0 24 24">
        <rect x="1" y="2" width="22" height="21" fill="#eef4fb" stroke="#8aa0b8" />
        <path d="M2 21V15l3-2 2 2 3-9 2 6 2-8 3 10 2-2 3 3v6Z" fill="#4b9fd8" />
      </svg>
      <div className="mt-[5px] h-[3px] w-[5px] rounded-full bg-[#7c8187]" />
    </div>
    <div className="ml-[11px] flex h-[38px] w-[40px] shrink-0 flex-col items-center justify-center rounded-[4px] bg-white/70 pt-[5px]">
      <BlenderLogo size={26} />
      <div className="mt-[3px] h-[3px] w-[16px] rounded-full bg-[#0a67c8]" />
    </div>
    <div className="relative ml-[13px] flex w-[24px] shrink-0 flex-col items-center pt-[8px]">
      <svg width="24" height="24" viewBox="0 0 24 24">
        <path d="M12 12 2.500 6.500A11.500 11.500 0 0 1 22 6.500H12Z" fill="#ea4335" />
        <path d="M2.500 6.500A11.500 11.500 0 0 0 11 23.500l5-9Z" fill="#34a853" />
        <path d="M22 6.500H12l4 8-5 9A11.500 11.500 0 0 0 22 6.500Z" fill="#fbbc05" />
        <circle cx="12" cy="12" r="5.200" fill="#fff" />
        <circle cx="12" cy="12" r="4" fill="#4285f4" />
      </svg>
      <div className="mt-[5px] h-[3px] w-[5px] rounded-full bg-[#7c8187]" />
      <div className="absolute -top-[1px] left-[13px] h-[17px] w-[17px] rounded-full border border-[#5a4530] bg-[#6d4a7d]">
        <div className="mx-auto mt-[3px] h-[7px] w-[7px] rounded-full bg-[#c9a07e]" />
      </div>
    </div>
    <Tile w="w-[12px]" className="ml-[129px]">
      <svg width="12" height="8" viewBox="0 0 12 8">
        <path d="M1 7l5-5.500L11 7" stroke="#222" fill="none" strokeWidth="1.300" />
      </svg>
    </Tile>
    <Tile w="w-[20px]" className="ml-[16px]">
      <svg width="20" height="22" viewBox="0 0 20 22">
        <path d="M3 8a6 6 0 0 1 10-4l3 2.500M16 2v4.500h-4.500M13 15a6 6 0 0 1-8 2l-3-2.500M2 19v-4.500h4.500" stroke="#222" fill="none" strokeWidth="1.100" />
        <circle cx="13.500" cy="15.500" r="4" fill="#f09018" />
      </svg>
    </Tile>
    <div className="ml-[10px] w-[36px] shrink-0 text-center text-[11.5px] leading-[16px]">
      <div>ENG</div>
      <div>US</div>
    </div>
    <Tile w="w-[18px]" className="ml-[10px]">
      <svg width="18" height="15" viewBox="0 0 18 15">
        <path d="M1 5.500a11.500 11.500 0 0 1 16 0M3.500 8a8 8 0 0 1 11 0M6 10.500a4.500 4.500 0 0 1 6 0" stroke="#111" fill="none" strokeWidth="1.100" />
        <circle cx="9" cy="13" r="1.300" fill="#111" />
      </svg>
    </Tile>
    <Tile w="w-[16px]" className="ml-[9px]">
      <svg width="16" height="16" viewBox="0 0 16 16">
        <path d="M1 5.500h2.500L7 2.500v11L3.500 10.500H1Z" fill="none" stroke="#111" />
        <circle cx="11" cy="11" r="4.300" fill="#111" />
        <path d="M9.500 9.500l3 3M12.500 9.500l-3 3" stroke="#fff" />
      </svg>
    </Tile>
    <div className="w-[78px] shrink-0 text-right text-[11.5px] leading-[17px]">
      <div>11:52 am</div>
      <div>14/01/2025</div>
    </div>
    <Tile w="w-[16px]" className="ml-[7px]">
      <svg width="16" height="18" viewBox="0 0 16 18">
        <path d="M8 1C5 1 3.500 3.500 3.500 6v4L1.500 13h13l-2-3V6C12.500 3.500 11 1 8 1ZM6 14.500a2 2 0 0 0 4 0Z" fill="#0b5cad" />
      </svg>
    </Tile>
  </div>
);

export default function App() {
  return (
    <div className="flex h-[900px] w-[1440px] flex-col overflow-hidden whitespace-nowrap bg-[#181818] font-['Inter'] text-[11.3px]">
      <div className="flex h-[23px] shrink-0 items-center bg-[#eef3fb] font-['Open_Sans'] text-[11.5px] tracking-[-.08px] text-[#1a1a1a]">
        <div className="ml-[3px] mr-[6px]">
          <BlenderLogo size={14} />
        </div>
        <span className="flex-1">Mariveles_Act_1 [C:\Users\StudentPc26\Documents\Mariveles_Act_1.blend] - Blender 4.3.2</span>
        <svg width="12" height="12" viewBox="0 0 12 12" className="mr-[33px]">
          <path d="M1 6h10" stroke="#222" />
        </svg>
        <svg width="12" height="12" viewBox="0 0 12 12" className="mr-[34px]">
          <path d="M1.500 3h8v8h-8ZM3.500 3V1h7.500v7.500H9.500" stroke="#222" fill="none" />
        </svg>
        <svg width="12" height="12" viewBox="0 0 12 12" className="mr-[19px]">
          <path d="M1 1l10 10M11 1 1 11" stroke="#222" />
        </svg>
      </div>
      <TopBar />
      <div className="flex h-[778px] shrink-0 pl-[2px]">
        <div className="flex w-[1186px] flex-col gap-[3px]">
          <Viewport />
          <Timeline />
        </div>
        <div className="ml-[4px] flex w-[246px] flex-col gap-[4px]">
          <Outliner />
          <Properties />
        </div>
      </div>
      <div className="flex h-[24px] shrink-0 items-center justify-end bg-[#181818] pr-[11px] text-[#8a8a8a]">
        <svg width="15" height="15" viewBox="0 0 15 15" className="mr-[6px]">
          <circle cx="7.500" cy="7.500" r="6" fill="none" stroke="#666" />
          <path d="M1.500 7.500h12M7.500 1.500c-3 3-3 9 0 12M7.500 1.500c3 3 3 9 0 12M2 2l11 11" fill="none" stroke="#666" />
        </svg>
        <span className="mr-[4px] text-[#777]">|</span>4.3.2
      </div>
      <Taskbar />
    </div>
  );
}
